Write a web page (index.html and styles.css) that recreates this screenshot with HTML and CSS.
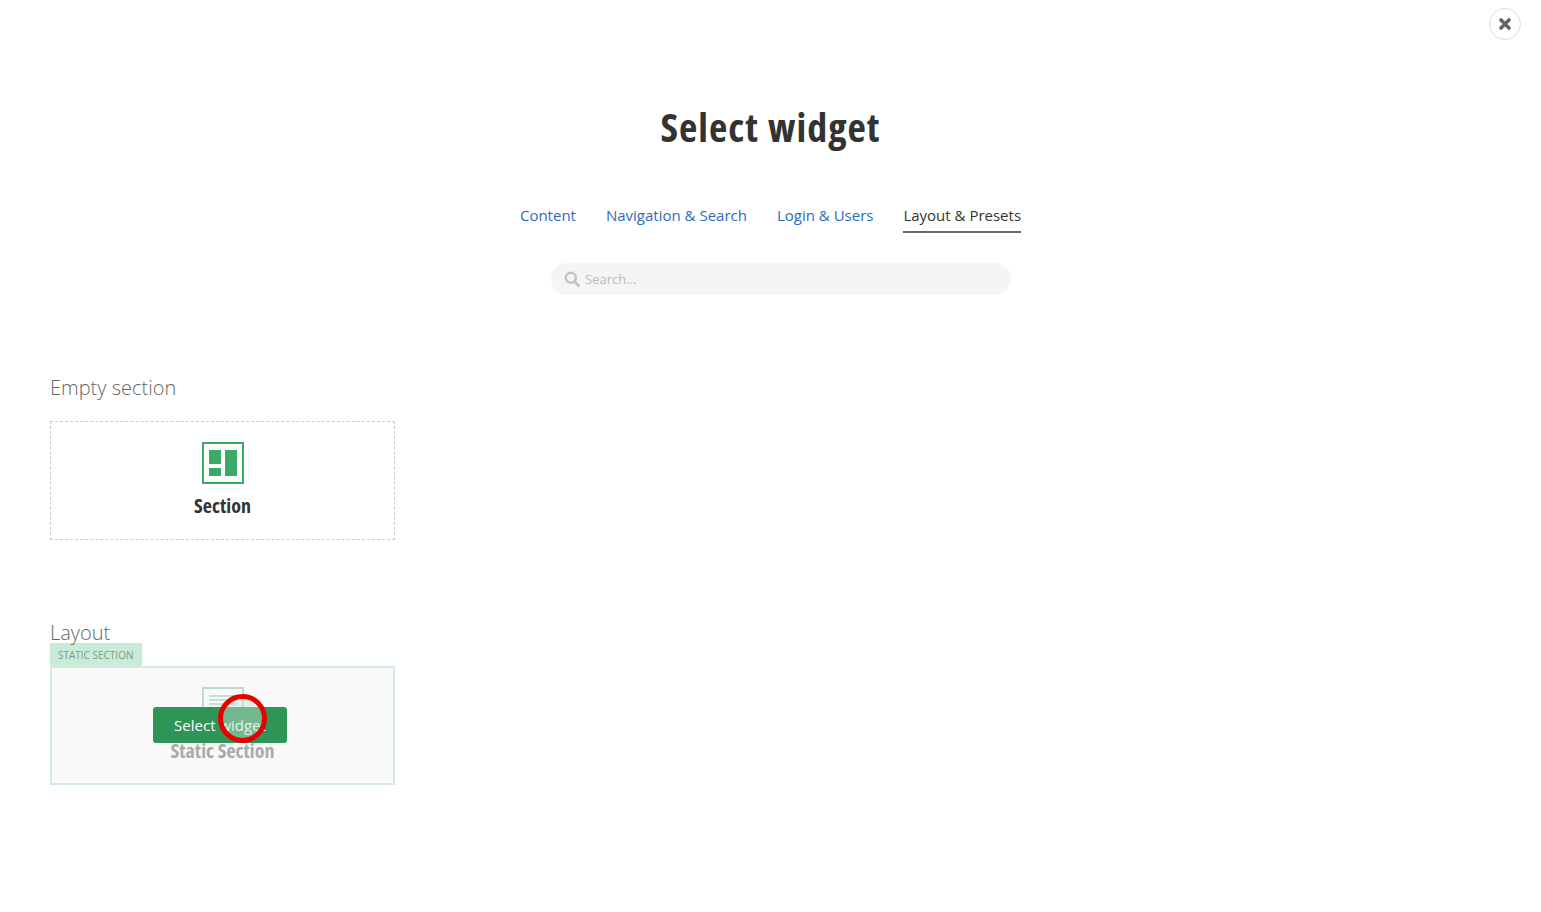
FILE: index.html
```html
<!DOCTYPE html>
<html lang="en">
<head>
    <meta charset="UTF-8">
    <title>Select widget</title>
    <link rel="stylesheet" href="styles.css">
</head>
<body>

<button class="close-btn" aria-label="Close">
    <svg width="14" height="14" viewBox="0 0 14 14"><path d="M3 3l8 8M11 3l-8 8" stroke="#666" stroke-width="3.6" stroke-linecap="round"/></svg>
</button>

<header class="top">
    <h1>Select widget</h1>
    <nav class="tabs">
        <a href="#">Content</a>
        <a href="#">Navigation &amp; Search</a>
        <a href="#">Login &amp; Users</a>
        <a href="#" class="active">Layout &amp; Presets</a>
    </nav>
    <div class="search">
        <svg width="16" height="16" viewBox="0 0 16 16"><circle cx="6.8" cy="6.8" r="5" fill="none" stroke="#c4c4c4" stroke-width="2.4"/><path d="M10.5 10.5l4 4" stroke="#c4c4c4" stroke-width="3" stroke-linecap="round"/></svg>
        <span>Search...</span>
    </div>
</header>

<section class="group first">
    <h2>Empty section</h2>
    <div class="card dashed">
        <svg class="widget-icon" width="42" height="42" viewBox="0 0 42 42">
            <rect x="1" y="1" width="40" height="40" fill="none" stroke="#3aaa66" stroke-width="2"/>
            <path d="M7 8h12v14H7zM7 26h12v8H7zM23 8h12v26H23z" fill="#3aaa66"/>
        </svg>
        <div class="card-name">Section</div>
    </div>
</section>

<section class="group second">
    <h2>Layout</h2>
    <div class="tag">STATIC SECTION</div>
    <div class="card static">
        <svg class="widget-icon" width="42" height="42" viewBox="0 0 42 42">
            <rect x="1" y="1" width="40" height="40" fill="none" stroke="#bcdcca" stroke-width="2"/>
            <path d="M7 9h28M7 13h28M7 17h28M7 21h18" stroke="#c4e0d0" stroke-width="2"/>
        </svg>
        <div class="card-name">Static Section</div>
        <button class="select-btn">Select widget</button>
        <span class="cursor-mark"></span>
    </div>
</section>

</body>
</html>
```
FILE: styles.css
```css
body {
    font-family: "Open Sans", sans-serif;
    background-color: #fff;
    color: #333;
    margin: 0;
    padding: 0;
}
.close-btn {
    position: absolute;
    top: 8px;
    left: 1489px;
    width: 32px;
    height: 32px;
    padding: 0;
    display: flex;
    align-items: center;
    justify-content: center;
    background-color: #fff;
    border: 1px solid #ddd;
    border-radius: 50%;
}
.top {
    display: flex;
    flex-direction: column;
    align-items: center;
    padding-top: 99px;
}
h1 {
    margin: 0;
    font-size: 40px;
    line-height: 56px;
    font-weight: 700;
    font-stretch: condensed;
    letter-spacing: 1px;
    word-spacing: 1px;
    color: #333;
}
.tabs {
    display: flex;
    gap: 30px;
    margin-top: 50px;
    font-size: 15px;
}
.tabs a {
    color: #2b6cc0;
    text-decoration: none;
    line-height: 20px;
    padding-bottom: 6px;
    border-bottom: 2px solid transparent;
}
.tabs a.active {
    color: #333;
    border-bottom-color: #666;
}
.search {
    display: flex;
    align-items: center;
    gap: 5px;
    box-sizing: border-box;
    width: 460px;
    height: 32px;
    margin: 30px 0 0 21px;
    padding-left: 13px;
    background-color: #f5f5f5;
    border-radius: 16px;
    font-size: 13px;
    color: #bbb;
}
.group {
    margin-left: 50px;
    width: 345px;
}
.group.first {
    margin-top: 79px;
}
.group.second {
    margin-top: 79px;
}
h2 {
    margin: 0;
    font-size: 20px;
    line-height: 28px;
    font-weight: 300;
    color: #666;
}
.first h2 {
    margin-bottom: 19px;
}
.second h2 {
    margin-bottom: -4px;
}
.tag {
    width: 92px;
    height: 23px;
    box-sizing: border-box;
    padding-left: 8px;
    background-color: #c9ecd8;
    color: #7d9a8a;
    font-size: 10px;
    line-height: 25px;
    white-space: nowrap;
}
.card {
    position: relative;
    box-sizing: border-box;
    height: 119px;
    padding-top: 20px;
    display: flex;
    flex-direction: column;
    align-items: center;
}
.card.dashed {
    border: 1px dashed #ccc;
}
.card.static {
    border: 2px solid #d5ebe0;
    background-color: #f9f9f9;
    padding-top: 19px;
}
.card-name {
    margin-top: 8px;
    font-size: 20px;
    line-height: 27px;
    font-weight: 700;
    font-stretch: condensed;
    color: #333;
}
.static .card-name {
    color: #aaa;
}
.select-btn {
    position: absolute;
    top: 39px;
    left: 101px;
    width: 134px;
    height: 36px;
    padding: 0;
    background-color: #2f9556;
    color: #fff;
    border: none;
    border-radius: 3px;
    font-family: "Open Sans", sans-serif;
    font-size: 15px;
}
.cursor-mark {
    position: absolute;
    top: 26px;
    left: 166px;
    box-sizing: border-box;
    width: 49px;
    height: 49px;
    border: 5px solid #e60000;
    border-radius: 50%;
    background-color: rgba(200, 225, 210, 0.45);
}
```
